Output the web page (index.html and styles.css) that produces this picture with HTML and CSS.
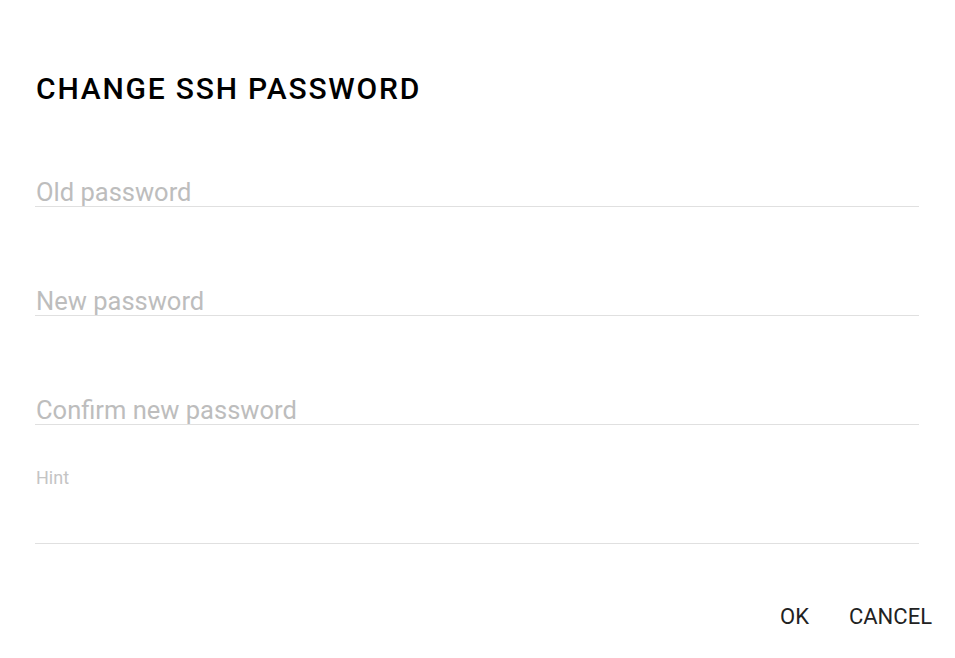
FILE: index.html
```html
<!DOCTYPE html>
<html lang="en">

<head>
  <meta charset="UTF-8">
  <meta name="viewport" content="width=device-width, initial-scale=1.0">
  <title>Change SSH password</title>
  <link rel="stylesheet" href="styles.css">
</head>

<body>
  <form class="dialog" action="javascript:void(0);">
    <h2 class="dialog-title">CHANGE SSH PASSWORD</h2>

    <div class="field">
      <input type="password" placeholder="Old password">
    </div>
    <div class="field">
      <input type="password" placeholder="New password">
    </div>
    <div class="field">
      <input type="password" placeholder="Confirm new password">
    </div>
    <div class="field field-hint">
      <label for="hint">Hint</label>
      <input type="text" id="hint">
    </div>

    <div class="actions">
      <button type="submit">OK</button>
      <button type="button">CANCEL</button>
    </div>
  </form>
</body>

</html>
```

FILE: styles.css
```css
body {
  margin: 0;
  background: #fff;
  font-family: Roboto, "Liberation Sans", sans-serif;
}

.dialog {
  padding: 71px 24px 0 35px;
}

.dialog-title {
  margin: 0 0 71px 1px;
  font-size: 30px;
  font-weight: 500;
  letter-spacing: 1.8px;
  color: #000;
  line-height: 36px;
}

.field {
  margin-right: 12px;
  border-bottom: 1px solid #e0e0e0;
  margin-bottom: 80px;
}

.field input {
  display: block;
  width: 100%;
  box-sizing: border-box;
  border: none;
  outline: none;
  padding: 0 0 0 1px;
  height: 28px;
  line-height: 28px;
  font-family: inherit;
  font-size: 25.5px;
  color: #222;
  background: transparent;
}

.field input::placeholder {
  color: #bdbdbd;
}

.field-hint {
  margin-top: -37px;
  margin-bottom: 0;
}

.field-hint label {
  display: block;
  padding-left: 1px;
  font-size: 18px;
  color: #c4c4c4;
  line-height: 20px;
}

.field-hint input {
  height: 55px;
}

.actions {
  display: flex;
  justify-content: flex-end;
  margin-top: 54px;
  margin-right: -1px;
}

.actions button {
  padding: 0;
  height: 36px;
  border: none;
  background: none;
  font-family: inherit;
  font-size: 22px;
  font-weight: 400;
  color: #222;
  cursor: pointer;
}

.actions button + button {
  margin-left: 40px;
}
```
